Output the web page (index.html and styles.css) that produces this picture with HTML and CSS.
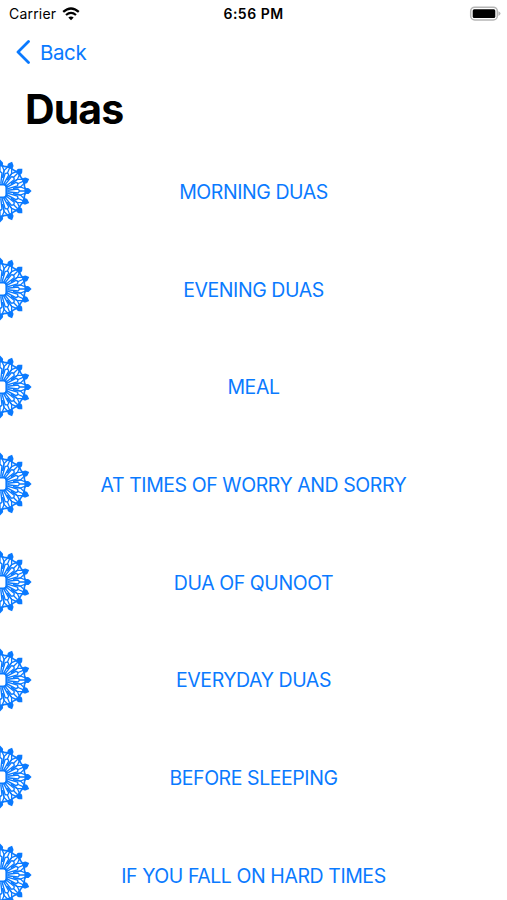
FILE: index.html
```
<!DOCTYPE html>
<html lang="en">
<head>
  <meta charset="UTF-8">
  <meta name="viewport" content="width=device-width, initial-scale=1.0">
  <title>Duas</title>
  <link rel="stylesheet" href="styles.css">
</head>
<body>

<!-- shared mandala, one petal repeated 16 times -->
<svg class="defs" width="0" height="0">
  <defs>
    <g id="petal">
      <path d="M7.500 -0.800 L18 -2 Q20.500 0 18 2 L7.500 0.800" fill="none" stroke="currentColor" stroke-width="1.400"/>
      <path d="M13 -2.600 L20.500 -4.100 L25.500 -2 M13 2.600 L20.500 4.100 L25.500 2 M19 0 H25" fill="none" stroke="currentColor" stroke-width="1.300"/>
      <path d="M24.300 -4.900 Q25.500 -3 25.500 0 Q25.500 3 24.300 4.900" fill="none" stroke="currentColor" stroke-width="1.700"/>
      <path d="M24.800 -2 L26.500 -3 Q28.500 -3.400 29.300 -2.200 L31.600 0 L29.300 2.200 Q28.500 3.400 26.500 3 L24.800 2 Z" fill="currentColor"/>
    </g>
    <g id="quarter">
      <use href="#petal"/>
      <use href="#petal" transform="rotate(22.5)"/>
      <use href="#petal" transform="rotate(45)"/>
      <use href="#petal" transform="rotate(67.5)"/>
    </g>
    <symbol id="mandala" viewBox="0 -32 32 64">
      <use href="#quarter"/>
      <use href="#quarter" transform="rotate(90)"/>
      <use href="#quarter" transform="rotate(-90)"/>
      <use href="#quarter" transform="rotate(180)"/>
      <rect x="-6.500" y="-6.500" width="13" height="13" rx="3" fill="#fff" stroke="currentColor" stroke-width="2.200"/>
    </symbol>
  </defs>
</svg>

<div class="status-bar">
  <div class="carrier">
    <span>Carrier</span>
    <svg class="wifi" viewBox="0 0 18 14" width="18" height="14">
      <path d="M1.200 4.900 Q9 -2 16.800 4.900" fill="none" stroke="#000" stroke-width="2.300"/>
      <path d="M4 8 Q9 3.700 14 8" fill="none" stroke="#000" stroke-width="2.200"/>
      <path d="M6.300 10.500 Q9 8.300 11.700 10.500 L9 13.300 Z" fill="#000"/>
    </svg>
  </div>
  <div class="time">6:56 PM</div>
  <div class="battery">
    <svg viewBox="0 0 32 16" width="32" height="16">
      <rect x="1.700" y="1.200" width="26.600" height="12.800" rx="4" fill="#fff" stroke="#b5b5b5" stroke-width="1.500"/>
      <rect x="3.700" y="3.200" width="22.600" height="8.800" rx="1.500" fill="#000"/>
      <path d="M29.400 5.300 Q31.500 6.200 31.500 7.600 Q31.500 9 29.400 9.900 Z" fill="#b5b5b5"/>
    </svg>
  </div>
</div>

<div class="nav">
  <a class="back" href="#">
    <svg viewBox="0 0 14 24" width="14" height="24">
      <path d="M12.500 1.500 L2 12 L12.500 22.500" fill="none" stroke="currentColor" stroke-width="2.800" stroke-linecap="round" stroke-linejoin="round"/>
    </svg>
    <span>Back</span>
  </a>
</div>

<h1>Duas</h1>

<div class="list">
  <a class="row" href="#"><svg class="mandala"><use href="#mandala"/></svg><span class="label">MORNING DUAS</span></a>
  <a class="row" href="#"><svg class="mandala"><use href="#mandala"/></svg><span class="label">EVENING DUAS</span></a>
  <a class="row" href="#"><svg class="mandala"><use href="#mandala"/></svg><span class="label">MEAL</span></a>
  <a class="row" href="#"><svg class="mandala"><use href="#mandala"/></svg><span class="label">AT TIMES OF WORRY AND SORRY</span></a>
  <a class="row" href="#"><svg class="mandala"><use href="#mandala"/></svg><span class="label">DUA OF QUNOOT</span></a>
  <a class="row" href="#"><svg class="mandala"><use href="#mandala"/></svg><span class="label">EVERYDAY DUAS</span></a>
  <a class="row" href="#"><svg class="mandala"><use href="#mandala"/></svg><span class="label">BEFORE SLEEPING</span></a>
  <a class="row" href="#"><svg class="mandala"><use href="#mandala"/></svg><span class="label">IF YOU FALL ON HARD TIMES</span></a>
</div>

</body>
</html>
```
FILE: styles.css
```
body {
  font-family: Inter, 'Liberation Sans', sans-serif;
  margin: 0;
  height: 900px;
  overflow: hidden;
  background-color: #fff;
  color: #000;
}

a {
  color: #0a7aff;
  text-decoration: none;
}

.defs {
  display: block;
}

.status-bar {
  display: grid;
  grid-template-columns: 1fr auto 1fr;
  align-items: center;
  height: 27px;
  padding: 0 6px 0 9px;
  font-size: 14px;
}

.carrier {
  display: flex;
  align-items: center;
  gap: 6px;
  letter-spacing: 0.2px;
}

.time {
  font-weight: 600;
  letter-spacing: 0.5px;
  margin-right: 3px;
}

.battery {
  display: flex;
  justify-content: flex-end;
}

.nav {
  display: flex;
  align-items: center;
  height: 50px;
  padding-left: 16px;
}

.back {
  display: flex;
  align-items: center;
  gap: 10px;
  font-size: 20.5px;
  letter-spacing: -0.4px;
}

h1 {
  margin: 0;
  padding-left: 25px;
  height: 66px;
  line-height: 64px;
  font-size: 41px;
  font-weight: 700;
  letter-spacing: -0.9px;
}

.list {
  display: flex;
  flex-direction: column;
}

.row {
  display: grid;
  grid-template-columns: 32px 1fr 32px;
  align-items: center;
  height: 97.7px;
  font-size: 19.5px;
}

.mandala {
  width: 32px;
  height: 64px;
  margin-top: -1px;
}

.label {
  text-align: center;
  letter-spacing: -0.43px;
}
```
